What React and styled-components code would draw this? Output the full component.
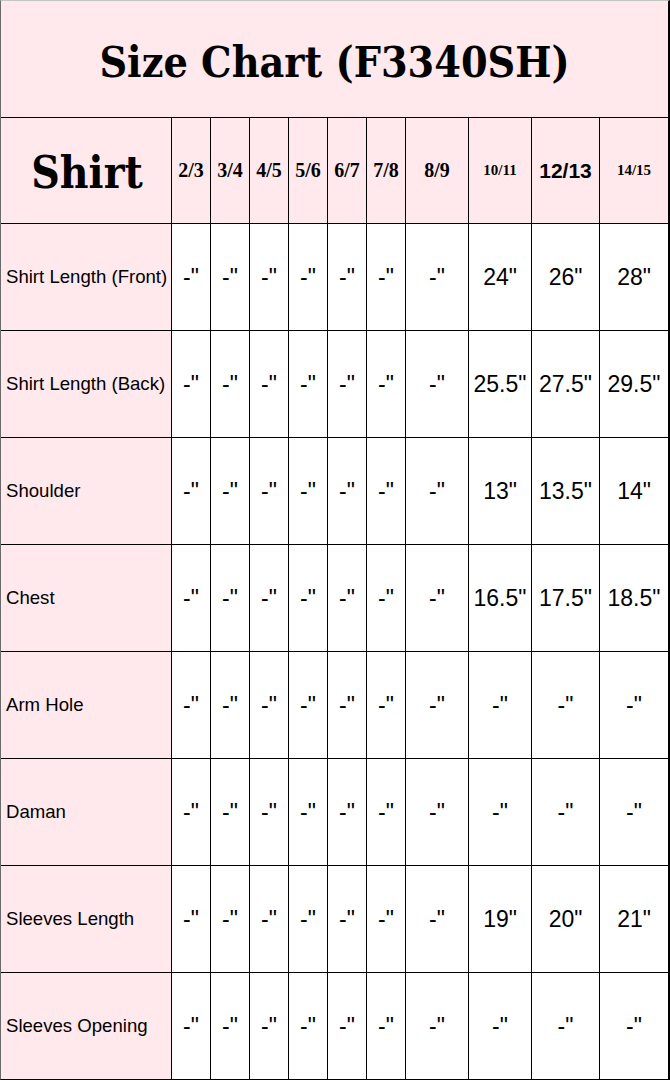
import React from 'react';
import styled, { createGlobalStyle } from 'styled-components';

const pink = '#ffe9ed';

const GlobalStyle = createGlobalStyle`
  html, body {
    margin: 0;
    padding: 0;
    background: #fff;
  }
`;

const Sheet = styled.div`
  box-sizing: border-box;
  width: 670px;
  height: 1080px;
  display: grid;
  grid-template-columns: 170px repeat(6, 38px) 62px 62px 67px 68px;
  grid-template-rows: 116px 105px repeat(8, 106px);
  gap: 1px;
  background: #000;
  border-top: 1px solid #c4c4c4;
  border-left: 1px solid #6a6a6a;
  border-right: 2px solid #000;
  border-bottom: 1px solid #000;
`;

const Cell = styled.div`
  display: flex;
  align-items: center;
  justify-content: ${(p) => (p.$left ? 'flex-start' : 'center')};
  background: ${(p) => (p.$pink ? pink : '#fff')};
  color: #000;
  overflow: hidden;
  white-space: nowrap;
`;

const TitleCell = styled(Cell)`
  grid-column: 1 / -1;
  font-family: 'DejaVu Serif Condensed', 'DejaVu Serif', serif;
  font-stretch: condensed;
  font-weight: bold;
  font-size: 42.6px;
  padding-top: 5px;
`;

const ShirtCell = styled(Cell)`
  font-family: 'DejaVu Serif Condensed', 'DejaVu Serif', serif;
  font-stretch: condensed;
  font-weight: bold;
  font-size: 44px;
  padding-top: 4px;
  padding-left: 2px;
`;

const sizeFonts = {
  serif: `font-family: 'Liberation Serif', serif; font-size: 20px;`,
  small: `font-family: 'Liberation Serif', serif; font-size: 15px;`,
  sans: `font-family: 'Liberation Sans', Arial, sans-serif; font-size: 21px;`,
};

const SizeCell = styled(Cell)`
  font-weight: bold;
  ${(p) => sizeFonts[p.$variant]}
`;

const LabelCell = styled(Cell)`
  padding-left: 5px;
  font-family: 'Liberation Sans', Arial, sans-serif;
  font-size: 18.6px;
`;

const ValueCell = styled(Cell)`
  font-family: 'Liberation Sans', Arial, sans-serif;
  font-size: 23px;
`;

const sizes = [
  ['2/3', 'serif'],
  ['3/4', 'serif'],
  ['4/5', 'serif'],
  ['5/6', 'serif'],
  ['6/7', 'serif'],
  ['7/8', 'serif'],
  ['8/9', 'serif'],
  ['10/11', 'small'],
  ['12/13', 'sans'],
  ['14/15', 'small'],
];

const dash = '-"';
const blank = [dash, dash, dash];

const rows = [
  ['Shirt Length (Front)', ['24"', '26"', '28"']],
  ['Shirt Length (Back)', ['25.5"', '27.5"', '29.5"']],
  ['Shoulder', ['13"', '13.5"', '14"']],
  ['Chest', ['16.5"', '17.5"', '18.5"']],
  ['Arm Hole', blank],
  ['Daman', blank],
  ['Sleeves Length', ['19"', '20"', '21"']],
  ['Sleeves Opening', blank],
];

const App = () => (
  <>
    <GlobalStyle />
    <Sheet>
      <TitleCell $pink>Size Chart (F3340SH)</TitleCell>

      <ShirtCell $pink>Shirt</ShirtCell>
      {sizes.map(([label, variant]) => (
        <SizeCell key={label} $pink $variant={variant}>
          {label}
        </SizeCell>
      ))}

      {rows.map(([label, values]) => (
        <React.Fragment key={label}>
          <LabelCell $pink $left>
            {label}
          </LabelCell>
          {[...Array(7).fill(dash), ...values].map((v, i) => (
            <ValueCell key={i}>{v}</ValueCell>
          ))}
        </React.Fragment>
      ))}
    </Sheet>
  </>
);

export default App;
